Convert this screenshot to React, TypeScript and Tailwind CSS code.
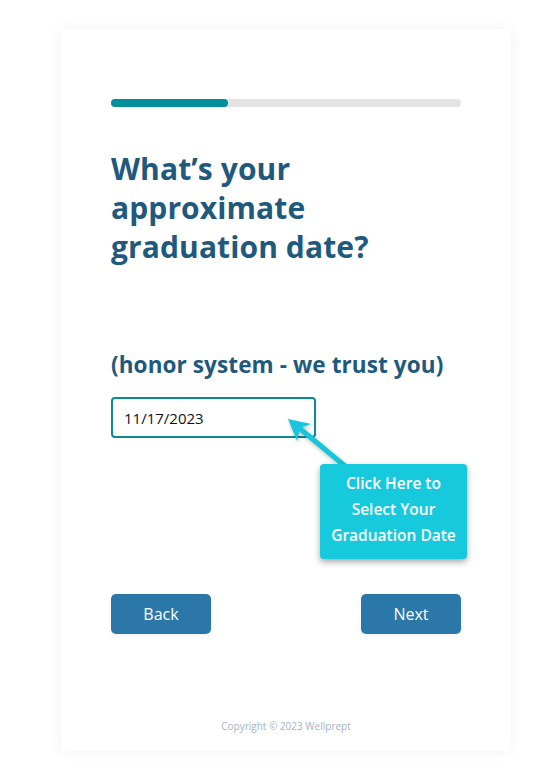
import React, { useState } from 'react';

export default function App() {
  const [date, setDate] = useState('11/17/2023');

  return (
    <div className="min-h-screen w-full bg-white font-['Open_Sans',sans-serif]">
      <div className="pt-[29px] pl-[61px]">
        <div className="relative flex h-[722px] w-[450px] flex-col bg-white px-[50px] pt-[70px] shadow-[0_0_14px_rgba(0,0,0,0.06)]">
          {/* progress */}
          <div className="h-[8px] w-full rounded-full bg-[#e4e4e4]">
            <div className="h-full w-1/3 rounded-full bg-[#018f9e]" />
          </div>

          <h1 className="mt-[42px] text-[30px] font-bold leading-[39px] tracking-[0.1px] text-[#1f597d]">
            What’s your
            <br />
            approximate
            <br />
            graduation date?
          </h1>

          <h2 className="mt-[84px] text-[22.5px] font-bold leading-[30px] tracking-[0.1px] text-[#1f597d]">
            (honor system - we trust you)
          </h2>

          <input
            className="mt-[17px] h-[41px] w-[205px] rounded-[4px] border-2 border-[#0b8a96] px-[11px] text-[15px] text-[#111] outline-none"
            type="text"
            value={date}
            onChange={(e) => setDate(e.target.value)}
          />

          <div className="mt-[156px] flex justify-between">
            <button className="h-[40px] w-[100px] rounded-[5px] bg-[#2b77a8] text-[16px] text-white shadow-[0_2px_6px_rgba(0,0,0,0.05)]">
              Back
            </button>
            <button className="h-[40px] w-[100px] rounded-[5px] bg-[#2b77a8] text-[16px] text-white shadow-[0_2px_6px_rgba(0,0,0,0.05)]">
              Next
            </button>
          </div>

          <p className="mt-auto pb-[17px] text-center text-[10px] text-[#a7b1c2]">
            Copyright © 2023 Wellprept
          </p>

          {/* hint arrow */}
          <svg
            className="absolute left-[220px] top-[383px] drop-shadow-[1px_2px_2px_rgba(0,0,0,0.25)]"
            width="70"
            height="60"
            viewBox="0 0 70 60"
          >
            <line x1="17" y1="15" x2="64" y2="54" stroke="#17c6dc" strokeWidth="5" />
            <polygon points="7,7 30,12 19,16 16,29" fill="#17c6dc" />
          </svg>

          {/* hint box */}
          <div className="absolute left-[259px] top-[435px] flex h-[95px] w-[147px] flex-col items-center justify-center rounded-[4px] bg-[#16c9dd] pb-[6px] text-center text-[15.5px] font-semibold leading-[26px] text-white shadow-[0_3px_6px_rgba(0,0,0,0.35)]">
            <span>Click Here to</span>
            <span>Select Your</span>
            <span>Graduation Date</span>
          </div>
        </div>
      </div>
    </div>
  );
}
